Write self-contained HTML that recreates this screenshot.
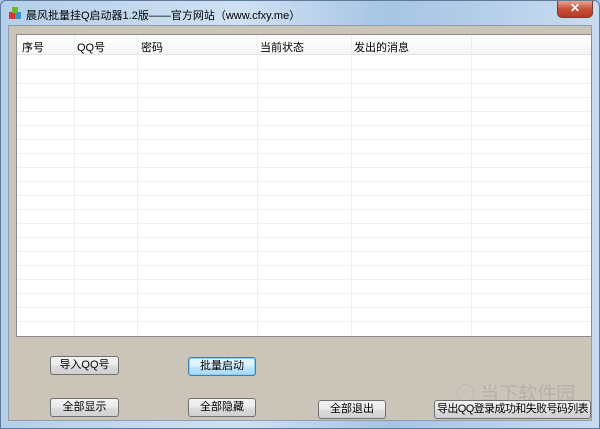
<!DOCTYPE html>
<html><head><meta charset="utf-8"><style>
*{margin:0;padding:0;box-sizing:border-box}
html,body{width:600px;height:429px;overflow:hidden}
body{font-family:"Liberation Sans","Noto Sans CJK SC",sans-serif;font-size:11px;color:#000;background:#a9c6e4;position:relative}
.win{position:absolute;left:0;top:0;width:600px;height:429px;background:linear-gradient(90deg,#b5cfe9,#cfe1f3 40%,#a6c4e4 65%,#c8dcf0);border:1px solid #5e7b9c;border-radius:6px 6px 0 0}
.title{position:absolute;left:25px;top:6px;font-size:11px;color:#000;white-space:nowrap}
.icon{position:absolute;left:7px;top:5px;width:14px;height:14px}
.close{position:absolute;left:556px;top:0;width:36px;height:17px;background:linear-gradient(#e8a493,#c8503a 50%,#b33a22);border:1px solid #7a3a2e;border-top:none;border-radius:0 0 5px 5px;color:#fff;text-align:center;font-weight:bold;font-size:12px;line-height:15px}
.client{position:absolute;left:7px;top:24px;width:584px;height:396px;background:#cbc4b8;border:1px solid #8f9db0}
.list{position:absolute;left:15px;top:33px;width:576px;height:303px;background:#fff;border:1px solid #8c8c8c;overflow:hidden}
.hdr{position:absolute;left:0;top:0;height:20px;width:100%;background:linear-gradient(#fff,#f4f5f7);border-bottom:1px solid #e3e4e6}
.hdr span{position:absolute;top:4px}
.col{position:absolute;top:0;bottom:0;width:1px;background:#eceef0}
.row{position:absolute;left:0;width:100%;height:1px;background:#f0f0f0}
.btn{position:absolute;height:19px;border:1px solid #707070;border-radius:3px;background:linear-gradient(#f2f2f2,#ebebeb 50%,#dddddd 51%,#cfcfcf);text-align:center;line-height:17px;font-size:11px;white-space:nowrap;overflow:hidden}
.btn.f{border-color:#3c7fb1;background:linear-gradient(#eaf6fd,#d9f0fc 50%,#bee6fd 51%,#a7d9f5);box-shadow:inset 0 0 0 1px #8fd0f2}
.wm{position:absolute;left:455px;top:378px;color:rgba(160,160,160,.5);font-size:19px;white-space:nowrap}
</style></head><body>
<div class="win">
<svg class="icon" viewBox="0 0 14 14"><rect x="1" y="6" width="6" height="7" fill="#d33"/><rect x="7" y="6" width="6" height="7" fill="#39c"/><rect x="4" y="1" width="6" height="6" fill="#6b3"/></svg>
<div class="title">晨风批量挂Q启动器1.2版——官方网站（www.cfxy.me）</div>
<div class="close">✕</div>
<div class="client"></div>
<div class="list">
<div class="hdr"><span style="left:5px">序号</span><span style="left:60px">QQ号</span><span style="left:124px">密码</span><span style="left:243px">当前状态</span><span style="left:337px">发出的消息</span></div>
<div class="col" style="left:57px"></div><div class="col" style="left:120px"></div><div class="col" style="left:240px"></div><div class="col" style="left:334px"></div><div class="col" style="left:454px"></div>
<div class="row" style="top:34px"></div><div class="row" style="top:48px"></div><div class="row" style="top:62px"></div><div class="row" style="top:76px"></div><div class="row" style="top:90px"></div><div class="row" style="top:104px"></div><div class="row" style="top:118px"></div><div class="row" style="top:132px"></div><div class="row" style="top:146px"></div><div class="row" style="top:160px"></div><div class="row" style="top:174px"></div><div class="row" style="top:188px"></div><div class="row" style="top:202px"></div><div class="row" style="top:216px"></div><div class="row" style="top:230px"></div><div class="row" style="top:244px"></div><div class="row" style="top:258px"></div><div class="row" style="top:272px"></div><div class="row" style="top:286px"></div>
</div>
<div class="btn" style="left:49px;top:355px;width:69px">导入QQ号</div>
<div class="btn f" style="left:187px;top:356px;width:68px">批量启动</div>
<div class="btn" style="left:49px;top:397px;width:69px">全部显示</div>
<div class="btn" style="left:187px;top:397px;width:68px">全部隐藏</div>
<div class="btn" style="left:317px;top:399px;width:68px">全部退出</div>
<div class="wm">◯ 当下软件园</div>
<div class="btn" style="left:433px;top:399px;width:157px;letter-spacing:-0.6px">导出QQ登录成功和失败号码列表</div>
</div>
</body></html>
